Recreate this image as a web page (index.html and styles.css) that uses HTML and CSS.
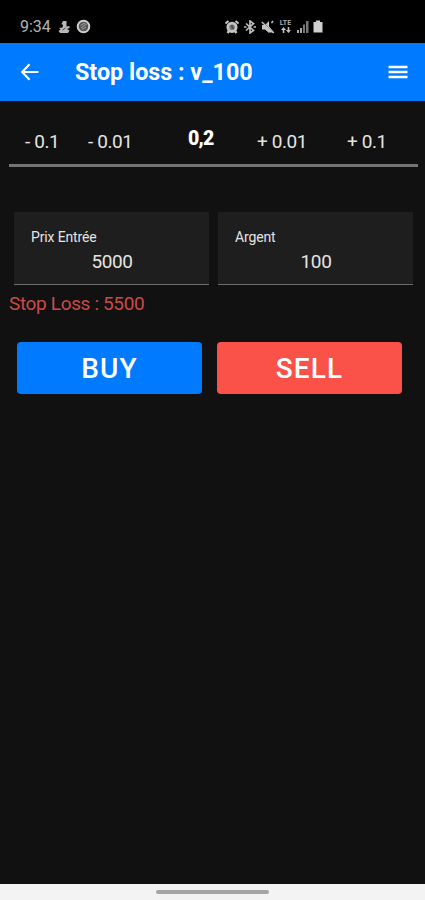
FILE: index.html
```html
<!DOCTYPE html>
<html lang="fr">
<head>
  <meta charset="UTF-8" />
  <meta name="viewport" content="width=device-width, initial-scale=1.0"/>
  <title>Stop loss : v_100</title>
  <link rel="stylesheet" href="styles.css">
</head>
<body>

<!-- Status bar -->
<div class="status-bar">
  <div class="status-left">
    <span class="clock">9:34</span>
    <svg class="icon-app" width="12" height="14" viewBox="0 0 12 14" fill="#b8b8b8">
      <path d="M5 1h3.500v5.500l3-.5v2L9 9l2.500 1.500-1.500 2.500H2L.5 11l2-1.500L1 8l3.500-.5L5 5 3.500 4z"/>
      <path d="M4.500 10l3-2" stroke="#444" fill="none"/>
    </svg>
    <svg width="15" height="15" viewBox="0 0 15 15">
      <circle cx="7.500" cy="7.500" r="5.800" fill="#555" stroke="#cfcfcf" stroke-width="2"/>
      <path d="M4.500 6.500l3-2 3 1M5 9l4-3M6 10.500l4-2.500" stroke="#a5a5a5" stroke-width="1" fill="none"/>
    </svg>
  </div>
  <div class="status-right">
    <svg width="14" height="14" viewBox="0 0 14 14" fill="none" stroke="#c4c4c4">
      <path d="M.5 3.500l3-2.500M13.500 3.500l-3-2.500" stroke-width="2"/>
      <path d="M2.500 13l1.500-2M11.500 13L10 11" stroke-width="2.500"/>
      <circle cx="7" cy="7.300" r="4.200" stroke-width="2.800" fill="#777"/>
      <path d="M7 5v2.500l2 1" stroke="#333" stroke-width="1"/>
    </svg>
    <svg width="14" height="14" viewBox="0 0 14 14" fill="none" stroke="#bdbdbd" stroke-width="1.700">
      <path d="M3 3.500l7.500 7L7 13V1l3.500 2.500L3 10.500"/>
      <path d="M1 7h2.500M10.500 7H13"/>
    </svg>
    <svg width="14" height="14" viewBox="0 0 14 14" fill="#c4c4c4">
      <path d="M1 5h3l4-4v12L4 9.500H1z"/>
      <path d="M7 5l6 7.500H8z"/>
      <path d="M1 1l12 12" stroke="#000" stroke-width="1"/>
      <path d="M.8 2l12 11M10.500 3l1.500-2" stroke="#c4c4c4" stroke-width="1.500"/>
    </svg>
    <div class="lte">
      <span>LTE</span>
      <svg width="10" height="6" viewBox="0 0 10 6" fill="#c4c4c4">
        <path d="M2.500 0L5 3H3.300v3H1.700V3H0zM7.500 6L5 3h1.700V0h1.600v3H10z"/>
      </svg>
    </div>
    <svg width="13" height="13" viewBox="0 0 13 13">
      <path d="M1 10h2v3H1zM4 8h2v5H4z" fill="#aaa"/>
      <path d="M7 4.500h2V13H7zM10 1h2.500v12H10z" fill="#777"/>
    </svg>
    <svg width="10" height="13" viewBox="0 0 10 13" fill="#cfcfcf">
      <path d="M3 .5h4V2h2.500v10.500H.5V2H3z"/>
    </svg>
  </div>
</div>

<header class="app-bar">
  <svg class="back" width="20" height="18" viewBox="0 0 20 18" fill="none" stroke="#fff" stroke-width="2.200">
    <path d="M18.500 9H2.500M9.500 1.200L2.200 9l7.300 7.800"/>
  </svg>
  <h1>Stop loss : v_100</h1>
  <svg class="menu" width="20" height="14" viewBox="0 0 20 14" stroke="#fff" stroke-width="2.300">
    <path d="M.5 2h19M.5 7h19M.5 12h19"/>
  </svg>
</header>

<main>
  <div class="stepper">
    <span>- 0.1</span>
    <span>- 0.01</span>
    <span class="current">0,2</span>
    <span>+ 0.01</span>
    <span>+ 0.1</span>
  </div>

  <div class="fields">
    <div class="field">
      <label>Prix Entrée</label>
      <div class="value">5000</div>
    </div>
    <div class="field">
      <label>Argent</label>
      <div class="value">100</div>
    </div>
  </div>

  <p class="result">Stop Loss : 5500</p>

  <div class="actions">
    <button class="btn buy">BUY</button>
    <button class="btn sell">SELL</button>
  </div>
</main>

<div class="nav-bar">
  <div class="handle"></div>
</div>

</body>
</html>
```
FILE: styles.css
```css
* {
  box-sizing: border-box;
}

body {
  margin: 0;
  height: 900px;
  display: flex;
  flex-direction: column;
  font-family: Roboto, sans-serif;
  background: #111;
  color: #e4e4e4;
  overflow: hidden;
}

.status-bar {
  height: 43px;
  padding: 10px 102px 0 20px;
  display: flex;
  align-items: center;
  justify-content: space-between;
  background: #000;
}

.status-left, .status-right {
  display: flex;
  align-items: center;
}

.clock {
  width: 38px;
  font-size: 16px;
  line-height: 18px;
  color: #b4b4b4;
}

.icon-app {
  margin-right: 6px;
}

.status-right {
  gap: 4px;
}

.lte {
  width: 13px;
  display: flex;
  flex-direction: column;
  align-items: center;
}

.lte span {
  font-size: 7px;
  line-height: 7px;
  font-weight: bold;
  color: #aaa;
}

.app-bar {
  height: 58px;
  padding: 0 17px 0 20px;
  display: flex;
  align-items: center;
  background: #007aff;
  color: #fff;
}

.app-bar h1 {
  flex: 1;
  margin: 0 0 0 35px;
  font-size: 23.3px;
  line-height: 28px;
  font-weight: bold;
}

main {
  flex: 1;
}

.stepper {
  height: 66px;
  margin: 0 7px 0 9px;
  padding: 17px 0 0 16px;
  display: grid;
  grid-template-columns: 63px 100px 69px 90px 1fr;
  align-items: center;
  border-bottom: 3px solid #747474;
  font-size: 19px;
  letter-spacing: -0.4px;
}

.stepper .current {
  margin-bottom: 6px;
  font-size: 19.5px;
  font-weight: 900;
  letter-spacing: -0.8px;
  color: #fff;
}

.fields {
  padding: 45px 12px 0 14px;
  display: grid;
  grid-template-columns: 195px 195px;
  gap: 9px;
}

.field {
  height: 73px;
  padding: 17px 16px 0 17px;
  background: #1e1e1e;
  border-bottom: 1px solid #6c6c6c;
}

.field label {
  display: block;
  font-size: 14px;
  line-height: 17px;
  letter-spacing: -0.15px;
}

.value {
  margin-top: 4px;
  text-align: center;
  font-size: 19px;
  line-height: 24px;
  letter-spacing: -0.4px;
}

.result {
  margin: 7px 9px 0;
  font-size: 19px;
  line-height: 24px;
  letter-spacing: -0.35px;
  color: #c94b4b;
}

.actions {
  padding: 26px 22px 0 17px;
  display: flex;
  gap: 15px;
}

.btn {
  width: 185px;
  height: 52px;
  padding: 0;
  border: 0;
  border-radius: 4px;
  font-family: inherit;
  font-size: 28px;
  font-weight: 500;
  letter-spacing: 1.1px;
  color: #fff;
}

.buy {
  background: #007aff;
}

.sell {
  background: #fa5249;
}

.nav-bar {
  height: 16px;
  padding-top: 6px;
  background: #f3f3f3;
}

.handle {
  width: 113px;
  height: 4px;
  margin: 0 auto;
  border-radius: 2px;
  background: #a5a5a5;
}
```
